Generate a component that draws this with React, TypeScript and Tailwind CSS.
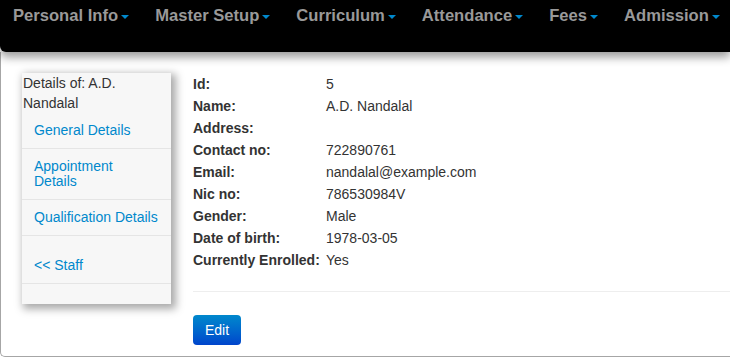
const menu = ["Personal Info", "Master Setup", "Curriculum", "Attendance", "Fees", "Admission"];

const details: [string, string][] = [
  ["Id:", "5"],
  ["Name:", "A.D. Nandalal"],
  ["Address:", ""],
  ["Contact no:", "722890761"],
  ["Email:", "nandalal@example.com"],
  ["Nic no:", "786530984V"],
  ["Gender:", "Male"],
  ["Date of birth:", "1978-03-05"],
  ["Currently Enrolled:", "Yes"],
];

function Caret() {
  return (
    <span className="ml-[3px] mt-[2px] inline-block h-0 w-0 border-x-[4px] border-t-[4px] border-x-transparent border-t-[#0088cc] align-middle" />
  );
}

function Sidebar() {
  return (
    <div className="w-[149px] shrink-0 self-start bg-[#f7f7f7] pb-[20px] shadow-[3px_3px_8px_2px_#aaa]">
      <div className="pl-[1px] text-[14px] leading-[20px] text-[#333]">
        Details of: A.D.
        <br />
        Nandalal
      </div>
      <ul className="text-[14px] leading-[15px] text-[#0088cc]">
        <li className="border-b border-[#e5e5e5]">
          <a className="block px-[12px] py-[10px]">General Details</a>
        </li>
        <li className="border-b border-[#e5e5e5]">
          <a className="block px-[12px] py-[10px]">
            Appointment
            <br />
            Details
          </a>
        </li>
        <li className="border-b border-[#e5e5e5]">
          <a className="block whitespace-nowrap px-[12px] py-[10px]">Qualification Details</a>
        </li>
        <li className="border-b border-[#e5e5e5]">
          <a className="block px-[12px] pb-[10px] pt-[22px]">&lt;&lt; Staff</a>
        </li>
      </ul>
    </div>
  );
}

export default function App() {
  return (
    <div className="h-[362px] w-[730px] overflow-hidden bg-white font-['Liberation_Sans',Arial,sans-serif]">
      <nav className="relative z-10 flex h-[52px] rounded-bl-[6px] bg-black pt-[6px] shadow-[0_5px_10px_rgba(0,0,0,0.4)]">
        {menu.map((m) => (
          <div key={m} className="flex h-[20px] items-center whitespace-nowrap px-[13px] text-[16.6px] font-bold leading-[20px] text-[#999]">
            {m}
            <Caret />
          </div>
        ))}
      </nav>
      <div className="flex h-[305px] rounded-bl-[5px] border-b border-l border-[#a6a6a6] pl-[21px] pt-[21px]">
        <Sidebar />
        <div className="ml-[22px] flex-1">
          <div className="grid grid-cols-[133px_1fr] text-[14px] leading-[22px] text-[#333]">
            {details.map(([k, v]) => (
              <div key={k} className="contents">
                <div className="whitespace-nowrap font-bold">{k}</div>
                <div>{v}</div>
              </div>
            ))}
          </div>
          <hr className="mt-[20px] border-t border-[#eee]" />
          <button className="mt-[23px] h-[30px] w-[48px] rounded-[4px] bg-gradient-to-b from-[#0088cc] to-[#0044cc] text-[14px] text-white">
            Edit
          </button>
        </div>
      </div>
    </div>
  );
}
